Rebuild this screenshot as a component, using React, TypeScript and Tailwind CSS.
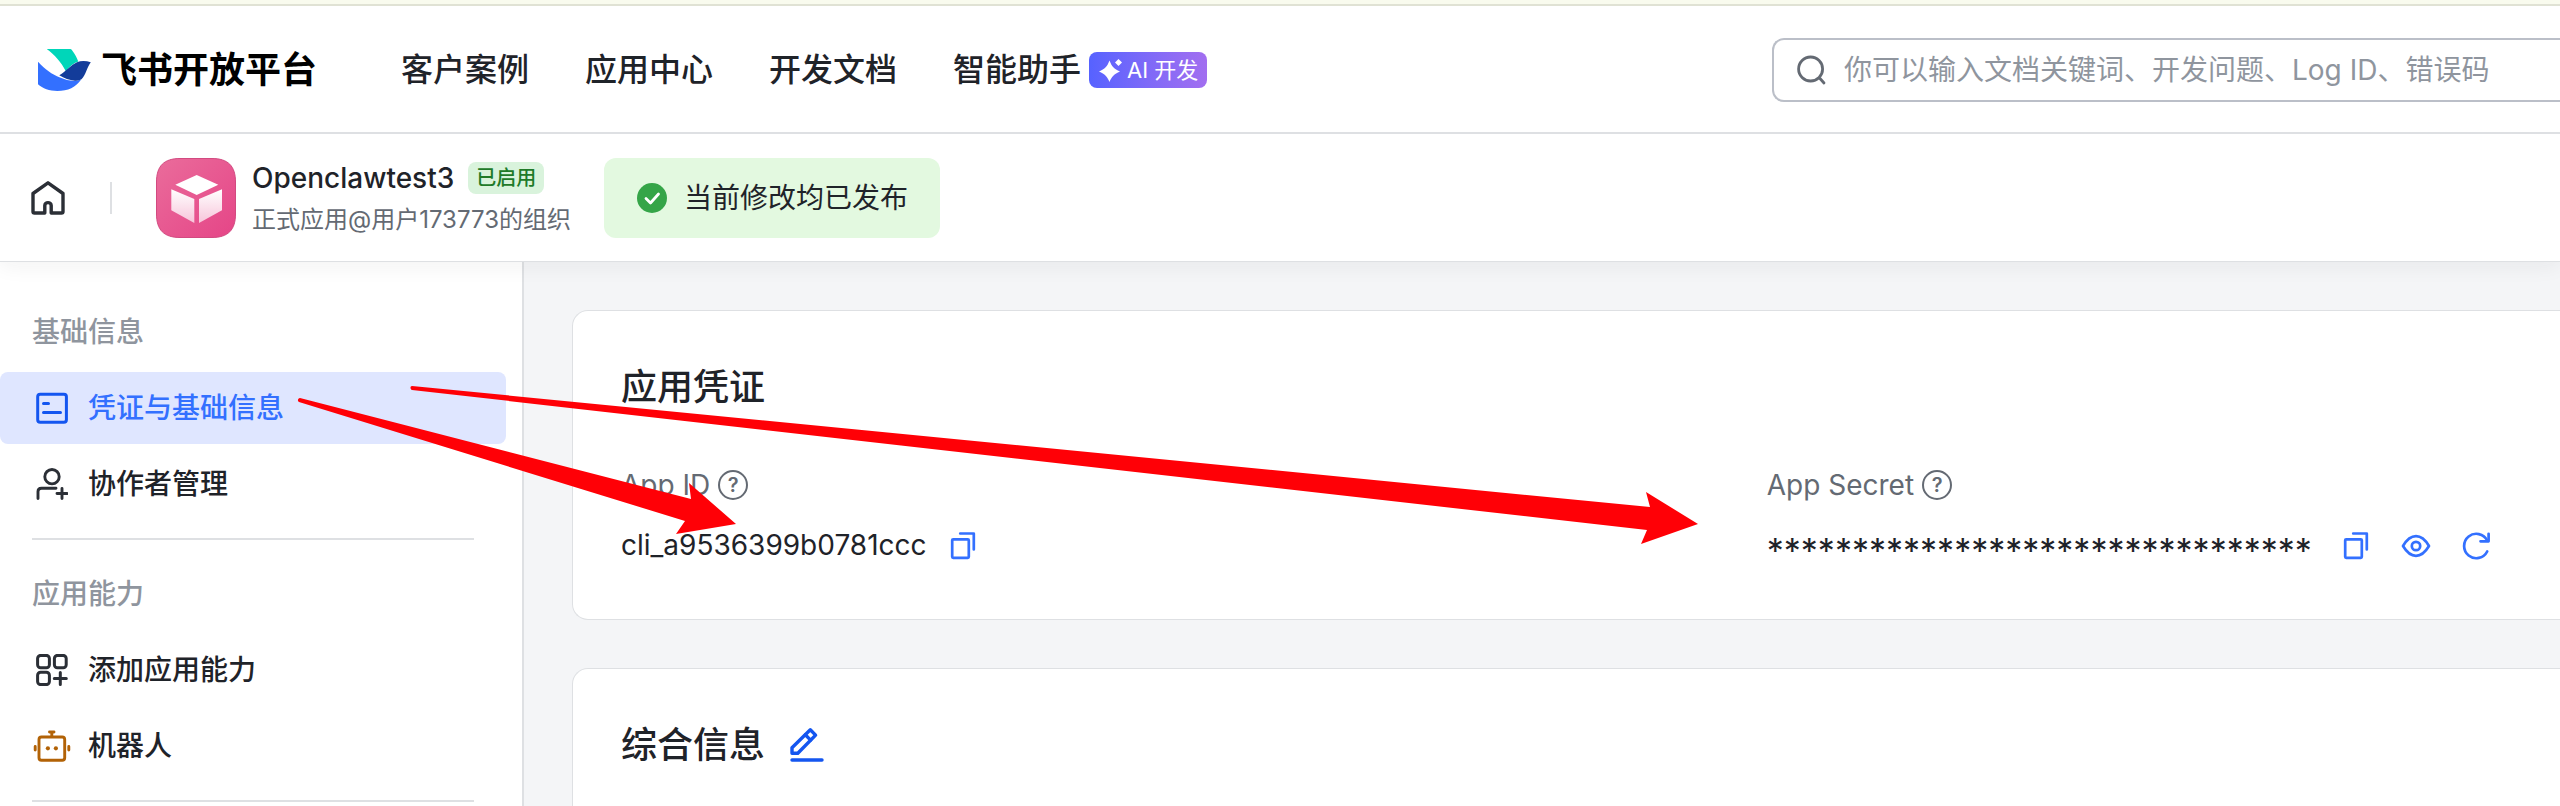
import { useState } from "react";

interface NavLink {
    label: string,
    badge?: string
}

interface MenuItem {
    label: string,
    icon: React.ReactNode,
    active?: boolean
}

interface MenuGroup {
    title: string,
    items: MenuItem[]
}

interface IconProps {
    className?: string
}

const LogoIcon: React.FC = () => (
    <svg className="h-[42px] w-[53px]" viewBox="0 0 53 42" fill="none" aria-hidden="true">
        <path d="M8.7 0H31.5C32.6 0 33.6.5 34.2 1.4C37 5 39 8.6 40.2 12.4C35.5 14 31.5 17.5 27.7 22C23 13 17 6 8.7 0Z" fill="#00D6B9" />
        <path d="M0 12.7C7 20 14 25.5 22 28.5C29 31.5 36 33 43 30.7C38 38 30 42 19.3 42C11.5 42 4.5 39.5 0 35.3V12.7Z" fill="#3370FF" />
        <path d="M52.8 13.3C48 11.6 43 11.5 39 13.2C33 16 28 22 21.3 26.3C26 29 31.5 31.5 37 31.7C40 31.8 42 31.3 43.5 30.3C48 26 48.5 19 52.8 13.3Z" fill="#133C9A" />
    </svg>
)

const SparkIcon: React.FC = () => (
    <svg className="h-6 w-6" viewBox="0 0 24 24" fill="#fff" aria-hidden="true">
        <path d="M10.5 2.5C12.8 8.5 15 11 21 13.5C15 16 12.8 18.500 10.5 24C8.200 18.500 6 16 0 13.5C6 11 8.200 8.500 10.5 2.5Z" />
        <path d="M19.5 1L23 4.5L19.5 8L16 4.5Z" />
    </svg>
)

const SearchIcon: React.FC = () => (
    <svg className="h-8 w-8 shrink-0" viewBox="0 0 32 32" fill="none" stroke="#646A73" strokeWidth="2.8" strokeLinecap="round" aria-hidden="true">
        <circle cx="14.6" cy="15" r="12" />
        <path d="M24 24.5L28 29" />
    </svg>
)

const HomeIcon: React.FC = () => (
    <svg className="h-10 w-10" viewBox="0 0 40 40" fill="none" stroke="#2B2F36" strokeWidth="3.4" strokeLinejoin="round" aria-hidden="true">
        <path d="M6.5 35C5.6 35 5 34.4 5 33.5V15.5L20 4.8L35 15.5V33.5C35 34.4 34.4 35 33.5 35H23.2V27.5C23.2 23.6 16.8 23.6 16.8 27.5V35Z" />
    </svg>
)

const AppIcon: React.FC = () => (
    <svg className="h-20 w-20 shrink-0" viewBox="0 0 80 80" aria-hidden="true">
        <defs>
            <linearGradient id="appBg" x1="0" y1="0" x2="1" y2="1">
                <stop offset="0" stopColor="#EA6C9B" />
                <stop offset="1" stopColor="#E54587" />
            </linearGradient>
            <linearGradient id="appFace" x1="0" y1="0" x2="0" y2="1">
                <stop offset="0" stopColor="#fff" />
                <stop offset="1" stopColor="#F7C5DA" />
            </linearGradient>
        </defs>
        <path d="M24 .5H56C72 .5 79.5 8 79.5 24V56C79.5 72 72 79.5 56 79.5H24C8 79.5 .5 72 .5 56V24C.5 8 8 .5 24 .5Z" fill="url(#appBg)" stroke="#D24A80" />
        <path d="M40.7 17L62.3 26.7L40.7 37L19.3 26.7Z" fill="#fff" />
        <path d="M15.3 31.3L38.3 41V65L15.3 52.3Z" fill="url(#appFace)" />
        <path d="M66 31.3L43 41V65L66 52.3Z" fill="url(#appFace)" />
    </svg>
)

const CheckIcon: React.FC = () => (
    <svg className="h-8 w-8" viewBox="0 0 32 32" fill="none" aria-hidden="true">
        <circle cx="16" cy="16" r="15" fill="#35A548" />
        <path d="M10 16.5L14.5 21L22.5 12" stroke="#fff" strokeWidth="2.8" strokeLinecap="round" strokeLinejoin="round" />
    </svg>
)

const CardIcon: React.FC = () => (
    <svg className="h-8 w-8" viewBox="0 0 32 32" fill="none" stroke="#1456F0" strokeWidth="3" strokeLinecap="round" aria-hidden="true">
        <rect x="1.7" y="2.3" width="28.7" height="28" rx="2.5" />
        <path d="M7.5 11.5H12.500M7.5 20.5H24.5" />
    </svg>
)

const UserAddIcon: React.FC = () => (
    <svg className="h-8 w-8" viewBox="0 0 32 32" fill="none" stroke="#2B2F36" strokeWidth="2.9" strokeLinecap="round" aria-hidden="true">
        <circle cx="16" cy="8.7" r="7.2" />
        <path d="M2 30.5V23.5C2 21.5 3.5 20.2 5.5 20.2H20M26 20.5V30.500M21 25.5H31" />
    </svg>
)

const GridAddIcon: React.FC = () => (
    <svg className="h-8 w-8" viewBox="0 0 32 32" fill="none" stroke="#2B2F36" strokeWidth="3" strokeLinecap="round" aria-hidden="true">
        <rect x="1.6" y="1.4" width="11.8" height="12.3" rx="3" />
        <rect x="18.4" y="1.4" width="11.8" height="12.3" rx="3" />
        <rect x="1.6" y="18.3" width="11.8" height="12.3" rx="3" />
        <path d="M24.3 18.5V30.500M18.3 24.5H30.3" />
    </svg>
)

const RobotIcon: React.FC = () => (
    <svg className="h-8 w-8 overflow-visible" viewBox="0 0 32 32" fill="none" stroke="#B26206" strokeWidth="2.9" strokeLinecap="round" aria-hidden="true">
        <rect x="3" y="7" width="25.7" height="23.3" rx="2.5" />
        <path d="M13.5 2H18M15.8 2V6M-.8 16.5V20M32.8 16.5V20" />
        <circle cx="11.9" cy="18.3" r="2.1" fill="#B26206" stroke="none" />
        <circle cx="19.9" cy="18.3" r="2.1" fill="#B26206" stroke="none" />
    </svg>
)

const CopyIcon: React.FC = () => (
    <svg className="h-8 w-8" viewBox="0 0 32 32" fill="none" stroke="#3370FF" strokeWidth="2.7" strokeLinecap="round" strokeLinejoin="round" aria-hidden="true">
        <rect x="5.2" y="10.3" width="16.6" height="18.5" rx="1" />
        <path d="M13.2 4.5H26.8V20.5" />
    </svg>
)

const EyeIcon: React.FC = () => (
    <svg className="h-8 w-8" viewBox="0 0 32 32" fill="none" stroke="#3370FF" strokeWidth="2.7" strokeLinejoin="round" aria-hidden="true">
        <path d="M3 17C7 10.3 11 7.2 16 7.2C21 7.2 25 10.3 29 17C25 23.7 21 26.8 16 26.8C11 26.8 7 23.7 3 17Z" />
        <circle cx="16" cy="17" r="4.2" />
    </svg>
)

const RefreshIcon: React.FC = () => (
    <svg className="h-8 w-8" viewBox="0 0 32 32" fill="none" stroke="#3370FF" strokeWidth="2.7" strokeLinecap="round" strokeLinejoin="round" aria-hidden="true">
        <path d="M27.2 22.5A12.2 12.2 0 1 1 27.2 11.5" />
        <path d="M28.6 4.8V12.3H20.5" />
    </svg>
)

const EditIcon: React.FC<IconProps> = ({className}) => (
    <svg className={className} viewBox="0 0 36 36" fill="none" stroke="#1456F0" strokeWidth="3.4" strokeLinecap="round" strokeLinejoin="round" aria-hidden="true">
        <path d="M21.3 2.8L26.6 8.1L8.8 26.2H3V20.7Z" />
        <path d="M16.3 7.8L21.6 13.1" />
        <path d="M3 33H33" />
    </svg>
)

const HelpButton: React.FC<{label: string}> = ({label}) => (
    <button
        type="button"
        aria-label={label}
        className="flex h-[30px] w-[30px] items-center justify-center rounded-full border-2 border-[#646A73] text-xl leading-none font-semibold text-[#646A73]"
    >
        ?
    </button>
)

const navLinks: NavLink[] = [
    { label: "客户案例" },
    { label: "应用中心" },
    { label: "开发文档" },
    { label: "智能助手", badge: "AI 开发" },
]

const menuGroups: MenuGroup[] = [
    {
        title: "基础信息",
        items: [
            { label: "凭证与基础信息", icon: <CardIcon />, active: true },
            { label: "协作者管理", icon: <UserAddIcon /> },
        ],
    },
    {
        title: "应用能力",
        items: [
            { label: "添加应用能力", icon: <GridAddIcon /> },
            { label: "机器人", icon: <RobotIcon /> },
        ],
    },
]

const TopBar: React.FC = () => {

    const [keyword, setKeyword] = useState("")

    return (
        <header className="relative z-20 flex h-32 shrink-0 items-center border-b-2 border-[#DEE0E3] bg-white pt-0.5 pl-[38px]">
            <a href="#" className="flex items-center gap-2.5">
                <LogoIcon />
                <span className="text-4xl font-bold text-black">飞书开放平台</span>
            </a>
            <nav className="ml-21 flex items-center gap-14">
                {navLinks.map((item) => (
                    <a key={item.label} href="#" className="flex items-center gap-2 text-[32px] leading-12 font-medium text-[#1F2329]">
                        {item.label}
                        {item.badge && (
                            <span className="flex h-9 w-[118px] items-center gap-1 rounded-lg bg-linear-to-r from-[#5662FF] to-[#A26EF0] pl-2.5 text-[22px] font-normal whitespace-nowrap text-white">
                                <SparkIcon />
                                {item.badge}
                            </span>
                        )}
                    </a>
                ))}
            </nav>
            <label className="ml-auto flex h-16 w-[788px] items-center gap-4 rounded-l-xl border-2 border-r-0 border-[#BBBFC8] bg-white pl-[22px]">
                <SearchIcon />
                <input
                    type="text"
                    aria-label="搜索"
                    value={keyword}
                    onChange={(e) => setKeyword(e.target.value)}
                    placeholder="你可以输入文档关键词、开发问题、Log ID、错误码"
                    className="min-w-0 flex-1 text-[28px] outline-none placeholder:text-[#8F959E]"
                />
            </label>
        </header>
    )
}

const AppBar: React.FC = () => (
    <section className="relative z-10 flex h-32 shrink-0 items-center border-b border-[#DEE0E3] bg-white pl-7 shadow-[0_4px_20px_rgba(31,35,41,0.06)]">
        <a href="#" aria-label="首页">
            <HomeIcon />
        </a>
        <div className="ml-[42px] h-8 w-0.5 bg-[#DEE0E3]"></div>
        <div className="ml-11 flex items-center gap-4">
            <AppIcon />
            <div className="flex flex-col">
                <div className="flex items-center gap-3.5">
                    <span className="text-[28px] leading-11 font-medium text-[#1F2329]">Openclawtest3</span>
                    <span className="rounded-lg bg-[#D9F3DC] px-2 text-xl leading-8 font-medium text-[#207A28]">已启用</span>
                </div>
                <span className="text-2xl leading-10 text-[#646A73]">正式应用@用户173773的组织</span>
            </div>
        </div>
        <div className="ml-[33px] flex h-20 items-center gap-4 rounded-xl bg-[#E3F9E0] px-8 text-[28px] text-[#1F2329]">
            <CheckIcon />
            当前修改均已发布
        </div>
    </section>
)

const SideMenu: React.FC = () => (
    <aside className="w-[524px] shrink-0 overflow-hidden border-r-2 border-[#DEE0E3] bg-white pt-4">
        {menuGroups.map((group) => (
            <div key={group.title} className="pt-8">
                <h2 className="mb-[18px] pl-8 text-[28px] leading-11 font-medium text-[#8F959E]">{group.title}</h2>
                <ul className="mr-4 flex flex-col gap-1">
                    {group.items.map((item) => (
                        <li key={item.label}>
                            <a
                                href="#"
                                className={`flex h-18 items-center gap-5 rounded-lg pl-9 text-[28px] font-medium ${item.active ? "bg-[#DFE6FF] text-[#3370FF]" : "text-[#1F2329]"}`}
                            >
                                {item.icon}
                                {item.label}
                            </a>
                        </li>
                    ))}
                </ul>
                <div className="mt-[18px] mr-12 ml-8 h-0.5 bg-[#DEE0E3]"></div>
            </div>
        ))}
    </aside>
)

const Credentials: React.FC = () => (
    <section className="rounded-l-2xl border border-r-0 border-[#DEE0E3] bg-white py-12 pl-12">
        <h1 className="text-4xl leading-14 font-medium text-[#1F2329]">应用凭证</h1>
        <dl className="mt-12 grid grid-cols-[13fr_9fr] pb-1">
            <div className="flex flex-col gap-4">
                <dt className="flex items-center gap-2 text-[28px] leading-11 text-[#646A73]">
                    App ID
                    <HelpButton label="App ID 说明" />
                </dt>
                <dd className="flex h-11 items-center gap-5 text-[28px] leading-11 text-[#1F2329]">
                    cli_a9536399b0781ccc
                    <button type="button" aria-label="复制 App ID"><CopyIcon /></button>
                </dd>
            </div>
            <div className="flex flex-col gap-4">
                <dt className="flex items-center gap-2 text-[28px] leading-11 text-[#646A73]">
                    App Secret
                    <HelpButton label="App Secret 说明" />
                </dt>
                <dd className="flex h-11 items-center gap-7 text-[#1F2329]">
                    <span className="pt-3 text-[34px] leading-8">********************************</span>
                    <button type="button" aria-label="复制 App Secret"><CopyIcon /></button>
                    <button type="button" aria-label="显示"><EyeIcon /></button>
                    <button type="button" aria-label="重置"><RefreshIcon /></button>
                </dd>
            </div>
        </dl>
    </section>
)

// red arrows pointing at App ID and App Secret
const Arrows: React.FC = () => (
    <svg className="pointer-events-none absolute top-0 left-0 z-20" width="1720" height="560" viewBox="0 0 1720 560" fill="#FF0006" aria-hidden="true">
        <path d="M300 398L691 499L689 483L736 524L676 534L685 521L299 402C297 401 298 398 300 398Z" />
        <path d="M412 386L1650 507L1646 492L1698 524L1641 544L1647 530L412 390C410 389 410 386 412 386Z" />
    </svg>
)

const App: React.FC = () => {
    return (
        <div className="relative flex h-screen flex-col overflow-hidden bg-[#F4F5F7] font-['Inter','Noto_Sans_CJK_SC',sans-serif]">
            <div className="h-1.5 shrink-0 border-b-2 border-[#E0E2D4] bg-[#F9FBEE]"></div>
            <TopBar />
            <AppBar />
            <div className="flex min-h-0 flex-1">
                <SideMenu />
                <main className="flex min-w-0 flex-1 flex-col gap-12 overflow-hidden pt-12 pl-12">
                    <Credentials />
                    <section className="flex-1 rounded-tl-2xl border-t border-l border-[#DEE0E3] bg-white pt-12 pl-12">
                        <div className="flex items-center gap-6">
                            <h1 className="text-4xl leading-14 font-medium text-[#1F2329]">综合信息</h1>
                            <button type="button" aria-label="编辑"><EditIcon className="h-9 w-9" /></button>
                        </div>
                    </section>
                </main>
            </div>
            <Arrows />
        </div>
    )
}

export default App
